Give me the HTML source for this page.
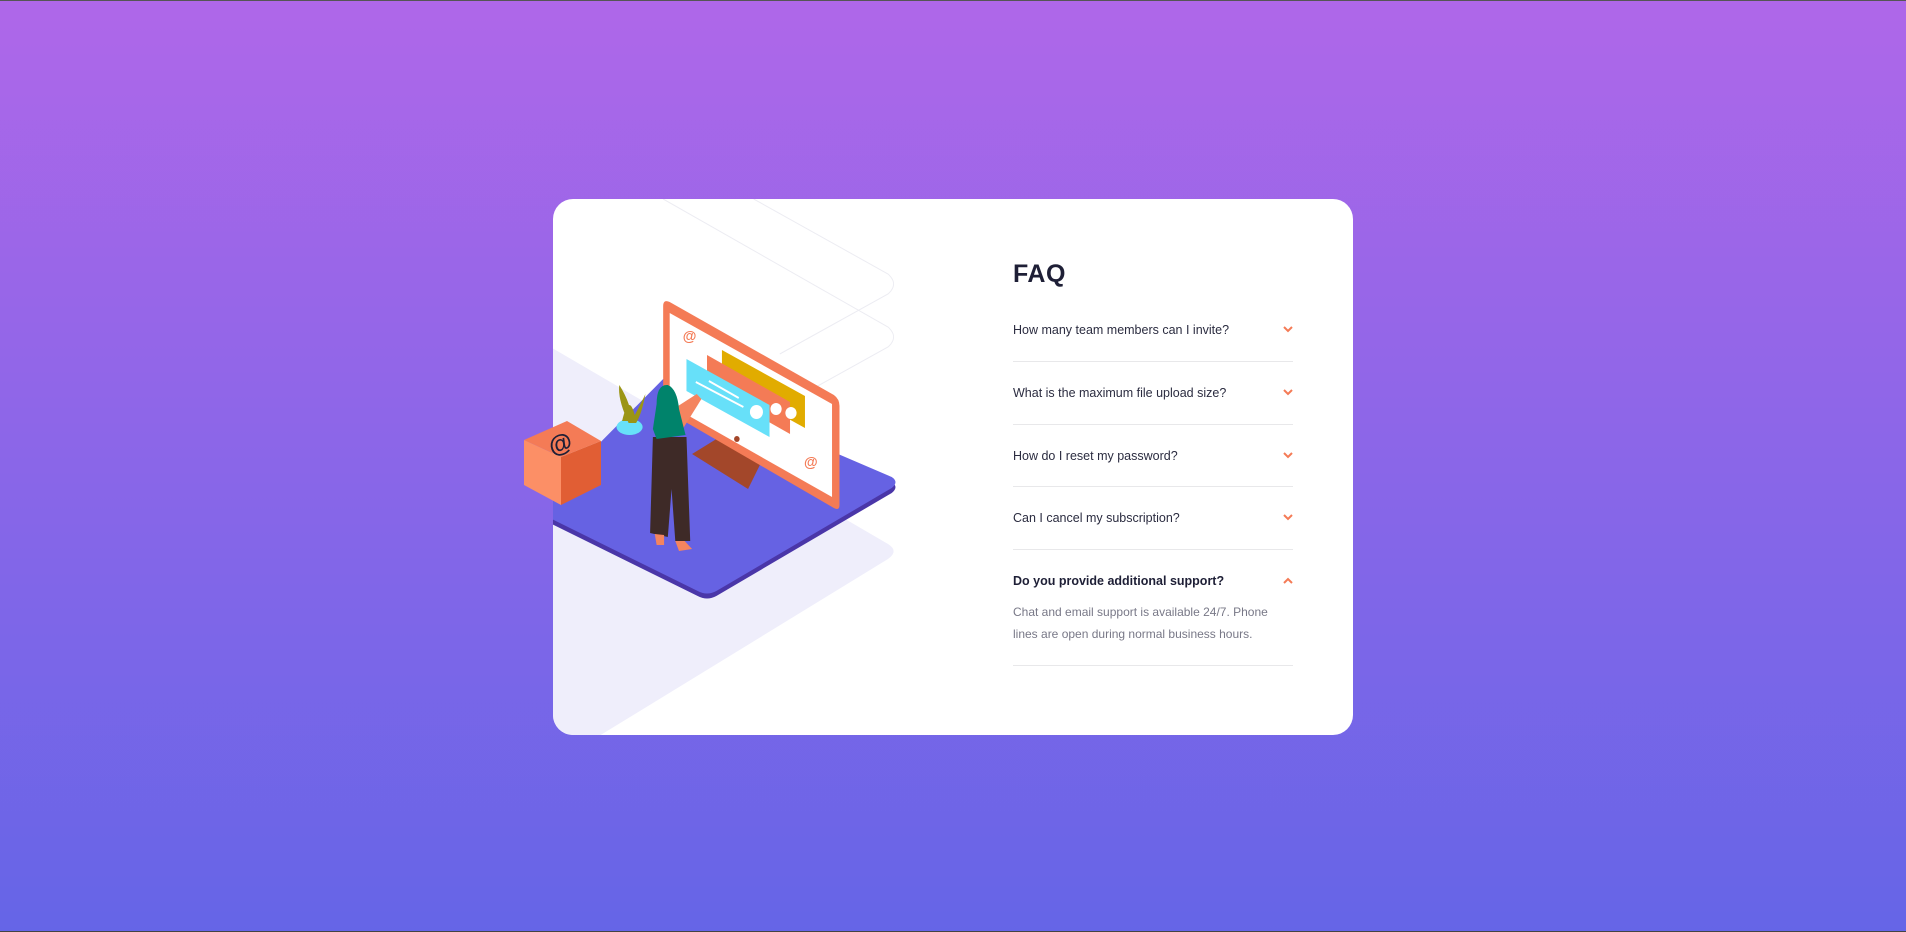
<!DOCTYPE html>
<html><head><meta charset="utf-8"><style>
*{margin:0;padding:0;box-sizing:border-box}
html,body{width:1906px;height:932px;overflow:hidden}
body{background:linear-gradient(180deg,#af67e9 0%,#6565e7 100%);font-family:"Liberation Sans",sans-serif;position:relative;border-top:1px solid #555;border-bottom:1px solid #444}
.card{position:absolute;left:553px;top:198px;width:800px;height:536px;background:#fff;border-radius:20px}
svg.ill{position:absolute;left:0;top:0;overflow:visible}
.faq{position:absolute;left:460px;top:0;width:280px}
h1{position:absolute;top:61px;left:0;font-size:25px;font-weight:bold;color:#1e1f36;letter-spacing:0.5px}
.q{position:absolute;left:0;width:280px;font-size:12.5px;color:#4b4c5f;line-height:16px}
.q span.t{color:#2b2c40}
.q .ch{position:absolute;right:0;top:4px}
.hr{position:absolute;left:0;width:280px;height:1px;background:#e8e8ea}
.a{position:absolute;left:0;width:280px;font-size:12px;color:#787887;line-height:22px}
</style></head><body>
<div class="card">
<svg class="ill" width="800" height="536" viewBox="0 0 800 536">
<defs><clipPath id="c"><rect x="0" y="0" width="800" height="536" rx="20"/></clipPath></defs>
<g clip-path="url(#c)">
<g transform="translate(-0.87 0) scale(0.933 1)">
<path d="M0 149 L360 345 Q372 352 360 360 L45 540 L0 540 Z" fill="#efeefb"/>
<path d="M119 0 L360 128 Q372 138 360 148 L244 208" fill="none" stroke="#ececf2" stroke-width="1"/>
<path d="M216 0 L360 75 Q372 85 360 95 L244 155" fill="none" stroke="#ececf2" stroke-width="1"/>
<path d="M-20 316 L119 185 L364 283 Q372 288 364 294 L176 397 Q166 402 156 397 Z" fill="#4a36a8"/>
<path d="M-20 311 L119 180 L364 278 Q372 283 364 289 L176 392 Q166 397 156 392 Z" fill="#6662e3"/>
<path d="M150 255 L190 232 L230 252 L210 290 Z" fill="#a3472a"/>
<path d="M119 107 Q119 100 126 103 L302 196 Q308 200 308 207 L308 306 Q308 312 302 309 L119 210 Z" fill="#f47b56"/>
<path d="M126 114 L300 205 L300 298 L126 206 Z" fill="#fff"/>
<path d="M182 151 L271 197 L271 229 L182 183 Z" fill="#e1ac00"/>
<path d="M166 156 L255 203 L255 235 L166 188 Z" fill="#f47b56"/>
<path d="M144 160 L233 206 L233 238 L144 192 Z" fill="#67e0f9"/>
<circle cx="256" cy="214" r="6" fill="#fff"/><circle cx="240" cy="210" r="6" fill="#fff"/><circle cx="219" cy="213" r="7" fill="#fff"/>
<path d="M154 183 L205 208 M168 182 L200 199" stroke="#fff" stroke-width="2"/>
<text x="140" y="142" font-size="15" fill="#f47b56" font-weight="bold" font-family="Liberation Sans">@</text>
<text x="270" y="268" font-size="15" fill="#f47b56" font-weight="bold" font-family="Liberation Sans">@</text>
<circle cx="198" cy="240" r="3" fill="#a3472a"/>
<ellipse cx="83" cy="228" rx="14" ry="8" fill="#67e0f9"/>
<path d="M75 222 Q83 190 90 222 Z M82 224 Q70 200 72 186 Q85 205 86 224 Z M84 224 Q95 205 100 195 Q96 215 90 224 Z" fill="#9b9515"/>
<path d="M108 238 L144 238 L148 342 L132 342 L128 290 L124 338 L105 334 Z" fill="#3e2a27"/>
<path d="M110 335 L120 336 L120 346 L112 346 Z M132 342 L142 342 L150 350 L136 352 Z" fill="#f4845f"/>
<path d="M130 210 L155 195 L160 200 L140 230 Z" fill="#f4845f"/>
<path d="M112 205 Q112 185 124 186 Q134 190 136 210 L143 236 L112 240 L108 230 Z" fill="#00836b"/>
</g>
</g>
<path d="M-29 241 L14 222 L48 242 L8 258 Z" fill="#f47b56"/>
<path d="M-29 241 L8 258 L8 306 L-29 286 Z" fill="#fc8f66"/>
<path d="M8 258 L48 242 L48 286 L8 306 Z" fill="#e15e34"/>
<text x="-6" y="252" font-size="24" fill="#1e1f36" font-weight="bold" font-family="Liberation Sans" transform="rotate(-20 8 240)">@</text>
</svg>
<div class="faq">
<h1>FAQ</h1>
<div class="q" style="top:123px"><span class="t">How many team members can I invite?</span><svg class="ch" width="10" height="7"><path d="M1 1l4 4 4-4" fill="none" stroke="#f47b56" stroke-width="2"/></svg></div>
<div class="hr" style="top:162px"></div>
<div class="q" style="top:186px"><span class="t">What is the maximum file upload size?</span><svg class="ch" width="10" height="7"><path d="M1 1l4 4 4-4" fill="none" stroke="#f47b56" stroke-width="2"/></svg></div>
<div class="hr" style="top:225px"></div>
<div class="q" style="top:249px"><span class="t">How do I reset my password?</span><svg class="ch" width="10" height="7"><path d="M1 1l4 4 4-4" fill="none" stroke="#f47b56" stroke-width="2"/></svg></div>
<div class="hr" style="top:287px"></div>
<div class="q" style="top:311px"><span class="t">Can I cancel my subscription?</span><svg class="ch" width="10" height="7"><path d="M1 1l4 4 4-4" fill="none" stroke="#f47b56" stroke-width="2"/></svg></div>
<div class="hr" style="top:350px"></div>
<div class="q" style="top:374px;font-weight:bold;color:#1e1f36">Do you provide additional support?<svg class="ch" width="10" height="7"><path d="M1 6l4-4 4 4" fill="none" stroke="#f47b56" stroke-width="2"/></svg></div>
<div class="a" style="top:402px">Chat and email support is available 24/7. Phone lines are open during normal business hours.</div>
<div class="hr" style="top:466px"></div>
</div>
</div>
</body></html>
